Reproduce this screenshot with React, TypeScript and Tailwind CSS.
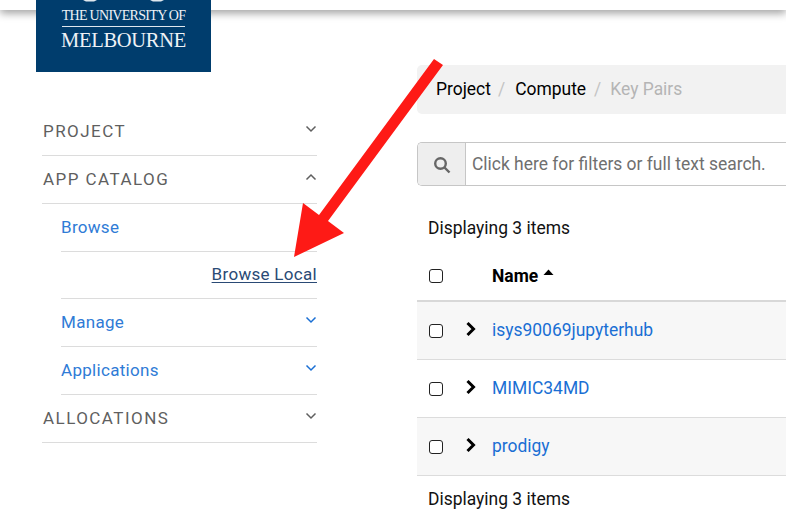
const NAV_LABEL = "pl-px text-[17px] tracking-[1.45px] text-[#5f5f5f]";

function Chevron({ up = false, className = "" }: { up?: boolean; className?: string }) {
  return (
    <svg width="12" height="8" viewBox="0 0 12 8" fill="none" stroke="currentColor" strokeWidth="1.5" className={className}>
      <path d={up ? "M1.5 6.5 6 2l4.5 4.5" : "M1.5 1.5 6 6l4.5-4.5"} />
    </svg>
  );
}

function TopRow({ label, up }: { label: string; up?: boolean }) {
  return (
    <div className="flex h-12 items-center justify-between border-b border-[#dcdcdc]">
      <span className={NAV_LABEL}>{label}</span>
      <Chevron up={up} className="mb-[6px] text-[#5f5f5f]" />
    </div>
  );
}

function SubRow({ label, chevron }: { label: string; chevron?: boolean }) {
  return (
    <div className="flex h-12 items-center justify-between border-b border-[#dcdcdc]">
      <span className="text-[17px] tracking-[0.3px] text-[#2f7bd6]">{label}</span>
      {chevron && <Chevron className="mb-[6px] text-[#1a6fd4]" />}
    </div>
  );
}

function Checkbox() {
  return <span className="block h-[14px] w-[14px] rounded-[3px] border-[1.5px] border-[#222] bg-white" />;
}

function TableRow({ name, striped }: { name: string; striped?: boolean }) {
  return (
    <div className={`flex h-[58px] items-center border-b border-[#dcdcdc] ${striped ? "bg-[#f7f7f7]" : "bg-white"}`}>
      <div className="ml-3 w-[36px]">
        <Checkbox />
      </div>
      <svg width="12" height="16" viewBox="0 0 12 16" fill="none" stroke="#000" strokeWidth="3" className="mb-[3px] shrink-0">
        <path d="M2.5 2 8.5 8l-6 6" />
      </svg>
      <span className="ml-[15px] text-[17.45px] text-[#1a6fd4]">{name}</span>
    </div>
  );
}

export default function App() {
  return (
    <div className="relative h-[524px] w-[786px] overflow-hidden bg-white font-['Roboto',sans-serif] text-[17.45px]">
      <div className="h-[10px] bg-white shadow-[0_3px_8px_rgba(0,0,0,0.4)]" />

      {/* logo sits over the header bar */}
      <div className="absolute left-[36px] top-0 flex h-[72px] w-[175px] flex-col items-center bg-[#003d6d] pt-[7px] text-[#eef2f6] font-['Liberation_Serif',serif]">
        <svg className="absolute left-[47px] top-0" width="81" height="2" viewBox="0 0 81 2" fill="#dfe7ee">
          <path d="M0 0h14l-3 1.5H3zM67 0h14l-3 1.5h-8z" />
        </svg>
        <div className="text-[14px] leading-[18px] tracking-[-0.7px] whitespace-nowrap">THE UNIVERSITY OF</div>
        <div className="mt-px h-px w-[123px] bg-[#dfe7ee]" />
        <div className="text-[20.5px] leading-[26px] tracking-[-0.3px] whitespace-nowrap">MELBOURNE</div>
      </div>

      <div className="flex">
        <nav className="ml-[42px] mt-[98px] w-[275px]">
          <TopRow label="PROJECT" />
          <TopRow label="APP CATALOG" up />
          <div className="ml-[19px]">
            <SubRow label="Browse" />
            <div className="flex h-[47px] items-center justify-end border-b border-[#dcdcdc]">
              <span className="text-[17px] tracking-[0.3px] text-[#2a4a75] underline underline-offset-2">Browse Local</span>
            </div>
            <SubRow label="Manage" chevron />
            <SubRow label="Applications" chevron />
          </div>
          <TopRow label="ALLOCATIONS" />
        </nav>

        <main className="ml-[100px] mt-[55px] w-[369px] shrink-0">
          <div className="flex h-[49px] items-center rounded-l-[5px] bg-[#f2f2f2] pl-[19px]">
            <span className="text-black">Project</span>
            <span className="ml-[7px] text-[#c4c4c4]">/</span>
            <span className="ml-[10px] text-black">Compute</span>
            <span className="ml-[8px] text-[#c4c4c4]">/</span>
            <span className="ml-[9px] text-[#b5b5b5]">Key Pairs</span>
          </div>

          <div className="mt-[28px] flex h-[44px] items-center rounded-l-[5px] border border-r-0 border-[#c6c6c6]">
            <div className="flex h-full w-[48px] items-center justify-center rounded-l-[4px] border-r border-[#c6c6c6] bg-[#eeeeee]">
              <svg width="18" height="18" viewBox="0 0 18 18" fill="none" stroke="#666" strokeWidth="2.4" className="mt-px">
                <circle cx="7.5" cy="7.5" r="5.3" />
                <path d="m11.5 11.5 5 5" />
              </svg>
            </div>
            <span className="ml-[6px] mt-px whitespace-nowrap text-[#6f6f6f]">Click here for filters or full text search.</span>
          </div>

          <div className="ml-[11px] mt-[32px] text-[#111] leading-5">Displaying 3 items</div>

          <div className="mt-[6px] flex h-[58px] items-center border-b-2 border-[#d8d8d8] pt-2">
            <div className="ml-3 w-[63px]">
              <Checkbox />
            </div>
            <span className="font-bold text-black">Name</span>
            <svg width="11" height="6" viewBox="0 0 11 6" className="mb-2 ml-[5px]">
              <path d="M0.5 6 5.5 0.5 10.5 6z" fill="#000" />
            </svg>
          </div>

          <TableRow name="isys90069jupyterhub" striped />
          <TableRow name="MIMIC34MD" />
          <TableRow name="prodigy" striped />

          <div className="ml-[11px] mt-[13px] text-[#111] leading-5">Displaying 3 items</div>
        </main>
      </div>

      {/* annotation arrow drawn on top of the screenshot */}
      <svg className="absolute left-0 top-0" width="786" height="524" viewBox="0 0 786 524">
        <polygon points="434,59 443,65 328,221 344,233 294,257 303,203 319,215" fill="#fe1a16" />
      </svg>
    </div>
  );
}
